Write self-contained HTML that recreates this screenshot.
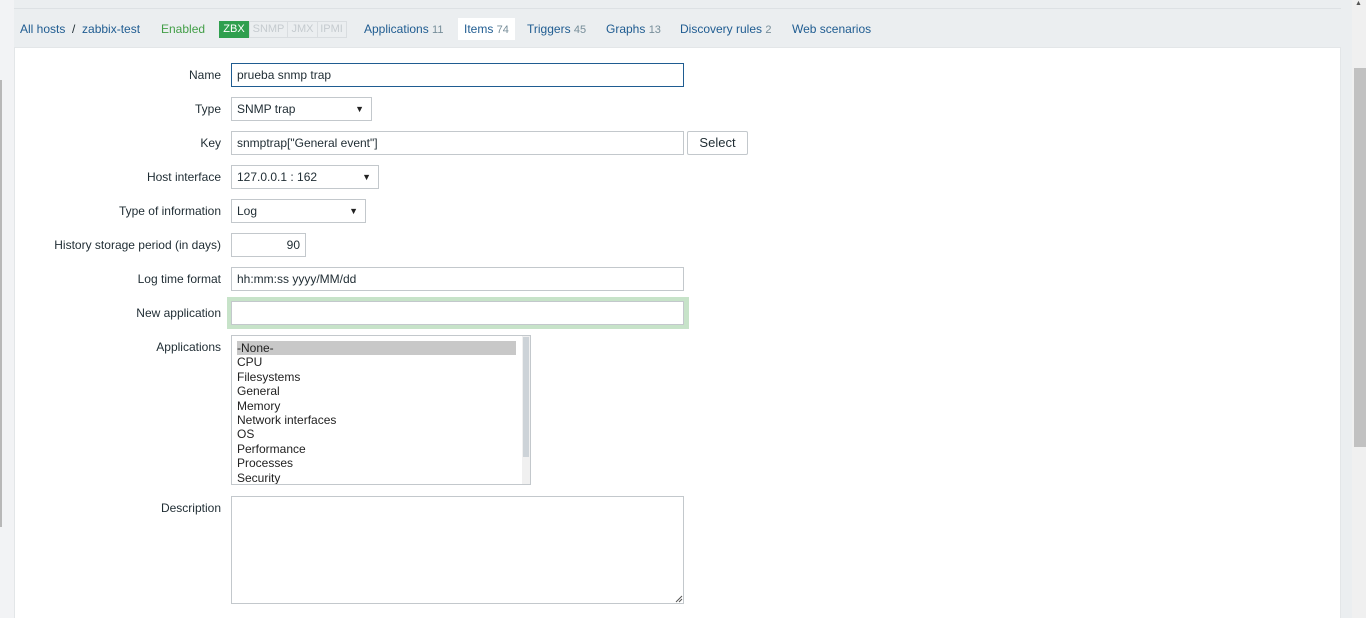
<!DOCTYPE html>
<html><head><meta charset="utf-8">
<style>
*{box-sizing:border-box;margin:0;padding:0}
body{width:1366px;height:618px;overflow:hidden;background:#ebeef0;font-family:"Liberation Sans",Arial,sans-serif;font-size:12px;color:#1f2c33;position:relative}
.a{position:absolute}
.nav{color:#1f5c91;font-size:12px;top:22px;white-space:nowrap}
.cnt{color:#768d99;font-size:11px}
.lbl{position:absolute;right:1145px;text-align:right;white-space:nowrap;font-size:12px;color:#1f2c33}
.inp{position:absolute;border:1px solid #c3c8cc;background:#fff;height:24px;padding:0 5px;line-height:22px;font-size:12px;white-space:nowrap}
.sel:after{content:"▼";position:absolute;right:7px;top:0;font-size:9px;color:#222}
</style></head><body>
<div class="a" style="left:0;top:0;width:14px;height:618px;background:#f2f3f5"></div>
<div class="a" style="left:0;top:80px;width:2px;height:447px;background:#b8b8b8"></div>
<div class="a" style="left:14px;top:8px;width:1327px;height:1px;background:#dde1e4"></div>
<div class="a nav" style="left:20px">All hosts <span style="color:#1f2c33">&nbsp;/&nbsp;</span> zabbix-test</div>
<div class="a nav" style="left:161px;color:#429e47">Enabled</div>
<div class="a" style="left:219px;top:21px;width:30px;height:17px;background:#2f9f4e;color:#fff;font-size:11px;line-height:17px;text-align:center">ZBX</div>
<div class="a" style="left:249px;top:21px;width:98px;height:17px;border:1px solid #d9dde0;color:#c5cbcf;font-size:11px;line-height:15px;white-space:nowrap"><span style="display:inline-block;width:38px;text-align:center;border-right:1px solid #d9dde0">SNMP</span><span style="display:inline-block;width:30px;text-align:center;border-right:1px solid #d9dde0">JMX</span><span style="display:inline-block;width:27px;text-align:center">IPMI</span></div>
<div class="a nav" style="left:364px">Applications <span class="cnt">11</span></div>
<div class="a" style="left:458px;top:18px;width:57px;height:22px;background:#fff"></div>
<div class="a nav" style="left:464px">Items <span class="cnt">74</span></div>
<div class="a nav" style="left:527px">Triggers <span class="cnt">45</span></div>
<div class="a nav" style="left:606px">Graphs <span class="cnt">13</span></div>
<div class="a nav" style="left:680px">Discovery rules <span class="cnt">2</span></div>
<div class="a nav" style="left:792px">Web scenarios</div>
<div class="a" style="left:14px;top:47px;width:1327px;height:571px;background:#fff;border-left:1px solid #e3e6e8;border-right:1px solid #e3e6e8;border-top:1px solid #e3e6e8"></div>
<div class="a" style="left:1352px;top:0;width:14px;height:618px;background:#f0f0f0"></div>
<div class="a" style="left:1354px;top:68px;width:12px;height:379px;background:#c1c1c1"></div>
<div class="a" style="left:1355px;top:0;font-size:7px;color:#555">▲</div>
<div class="lbl" style="top:68px">Name</div>
<div class="inp" style="left:231px;top:63px;width:453px;border-color:#1f5c91">prueba snmp trap</div>
<div class="lbl" style="top:102px">Type</div>
<div class="inp sel" style="left:231px;top:97px;width:141px">SNMP trap</div>
<div class="lbl" style="top:136px">Key</div>
<div class="inp" style="left:231px;top:131px;width:453px">snmptrap["General event"]</div>
<div class="inp" style="left:687px;top:131px;width:61px;text-align:center;font-size:13px;border-radius:2px">Select</div>
<div class="lbl" style="top:170px">Host interface</div>
<div class="inp sel" style="left:231px;top:165px;width:148px">127.0.0.1 : 162</div>
<div class="lbl" style="top:204px">Type of information</div>
<div class="inp sel" style="left:231px;top:199px;width:135px">Log</div>
<div class="lbl" style="top:238px">History storage period (in days)</div>
<div class="inp" style="left:231px;top:233px;width:75px;text-align:right">90</div>
<div class="lbl" style="top:272px">Log time format</div>
<div class="inp" style="left:231px;top:267px;width:453px">hh:mm:ss yyyy/MM/dd</div>
<div class="lbl" style="top:306px">New application</div>
<div class="a" style="left:227px;top:297px;width:462px;height:32px;background:#c7e3c9"></div>
<div class="inp" style="left:231px;top:301px;width:453px"></div>
<div class="lbl" style="top:340px">Applications</div>
<div class="a" style="left:231px;top:335px;width:300px;height:150px;border:1px solid #c3c8cc;background:#fff;overflow:hidden">
<div style="position:absolute;left:5px;top:5px;width:279px;line-height:14.4px;font-size:12px;color:#222">
<div style="background:#c8c8c8">-None-</div><div>CPU</div><div>Filesystems</div><div>General</div><div>Memory</div><div>Network interfaces</div><div>OS</div><div>Performance</div><div>Processes</div><div>Security</div></div>
<div style="position:absolute;right:0;top:0;width:8px;height:148px;background:#f0f0f0"></div>
<div style="position:absolute;right:1px;top:1px;width:6px;height:120px;background:#cdd3d8"></div>
</div>
<div class="lbl" style="top:501px">Description</div>
<div class="a" style="left:231px;top:496px;width:453px;height:108px;border:1px solid #c3c8cc;background:#fff"></div>
<svg class="a" style="left:674px;top:594px" width="9" height="9"><path d="M8 2L2 8M8 5L5 8" stroke="#555" stroke-width="1"/></svg>
</body></html>
